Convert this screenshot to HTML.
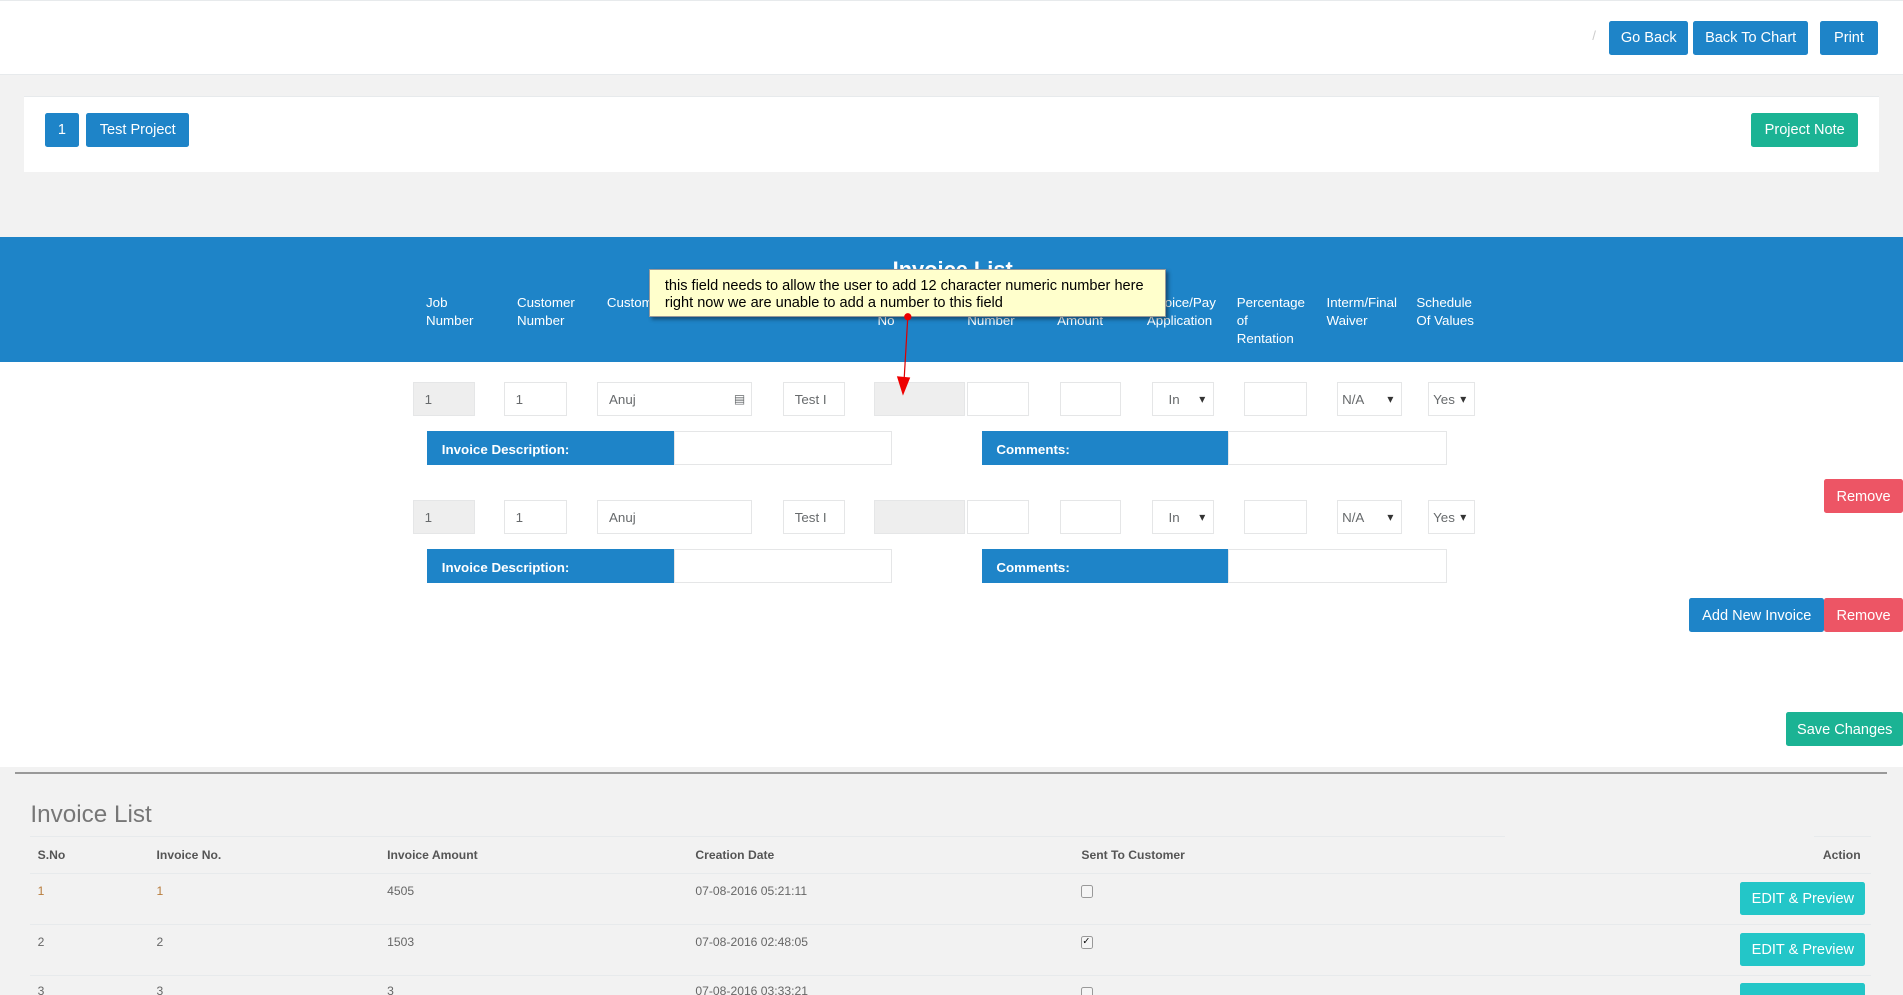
<!DOCTYPE html>
<html><head><meta charset="utf-8">
<style>
html,body{margin:0;padding:0;width:1903px;height:995px;overflow:hidden;background:#f2f2f2}
#w{zoom:1.21365;position:relative;width:1568px;height:820px;font-family:"Liberation Sans",sans-serif;font-size:12px;color:#555}
.a{position:absolute}
.btn{position:absolute;color:#fff;font-size:12px;display:flex;align-items:center;justify-content:center;border-radius:2px;padding-top:1px;box-sizing:border-box}
.bl{background:#1e84c8}
.gr{background:#1bb394}
.rd{background:#ed5565}
.tl{background:#23c6c8}
.in{position:absolute;background:#fff;border:1px solid #e5e6e7;box-sizing:border-box;height:28px;font-size:11px;color:#676a6c;padding-left:9px;line-height:28px}
.g{background:#eee}
.sel::after{content:"▾";position:absolute;right:6px;top:0;font-size:10px;color:#333}
.lbl{position:absolute;background:#1e84c8;color:#fff;font-weight:bold;font-size:11px;height:28px;line-height:32px;padding-left:12px;box-sizing:border-box}
.h{position:absolute;color:#fff;font-size:11px;line-height:15px;top:242px}
.th{position:absolute;top:699px;font-weight:bold;font-size:10px;color:#555}
.td{position:absolute;font-size:10px;color:#666}
.hl{position:absolute;left:25px;width:1517px;height:1px;background:#e7eaec}
.cb{position:absolute;width:8px;height:9px;border:1px solid #999;border-radius:2px;background:#f5f5f5;left:891px}
</style></head><body><div id="w">
<div class="a" style="left:0;top:0;width:1568px;height:62px;background:#fff;border-top:1px solid #e7eaec;border-bottom:1px solid #e7eaec;box-sizing:border-box"></div>
<div class="a" style="left:1312px;top:23px;color:#ccc;font-size:11px">/</div>
<div class="btn bl" style="left:1326px;top:17px;width:65px;height:28px">Go Back</div>
<div class="btn bl" style="left:1395px;top:17px;width:95px;height:28px">Back To Chart</div>
<div class="btn bl" style="left:1500px;top:17px;width:47px;height:28px">Print</div>

<div class="a" style="left:20px;top:79px;width:1528px;height:62px;background:#fff;border-top:1px solid #e7eaec"></div>
<div class="btn bl" style="left:37px;top:93px;width:28px;height:28px">1</div>
<div class="btn bl" style="left:71px;top:93px;width:85px;height:28px">Test Project</div>
<div class="btn gr" style="left:1443px;top:93px;width:88px;height:28px">Project Note</div>

<div class="a" style="left:0;top:195px;width:1568px;height:103px;background:#1e84c8"></div>
<div class="a" style="left:0;top:298px;width:1568px;height:334px;background:#fff"></div>
<div class="a" style="left:700px;top:212px;width:170px;text-align:center;color:#fff;font-weight:bold;font-size:18px">Invoice List</div>
<div class="h" style="left:351px">Job<br>Number</div>
<div class="h" style="left:426px">Customer<br>Number</div>
<div class="h" style="left:500px">Customer</div>
<div class="h" style="left:723px">Invoice<br>No</div>
<div class="h" style="left:797px">Invoice<br>Number</div>
<div class="h" style="left:871px">Invoice<br>Amount</div>
<div class="h" style="left:945px">Invoice/Pay<br>Application</div>
<div class="h" style="left:1019px">Percentage<br>of<br>Rentation</div>
<div class="h" style="left:1093px">Interm/Final<br>Waiver</div>
<div class="h" style="left:1167px">Schedule<br>Of Values</div>

<!-- row 1 -->
<div class="in g" style="left:340px;top:315px;width:51px">1</div>
<div class="in" style="left:415px;top:315px;width:52px">1</div>
<div class="in" style="left:492px;top:315px;width:128px">Anuj<span style="position:absolute;right:5px;top:0;font-size:10px">▤</span></div>
<div class="in" style="left:645px;top:315px;width:51px">Test I</div>
<div class="in g" style="left:720px;top:315px;width:75px"></div>
<div class="in" style="left:797px;top:315px;width:51px"></div>
<div class="in" style="left:873px;top:315px;width:51px"></div>
<div class="in sel" style="left:949px;top:315px;width:51px;padding-left:13px">In</div>
<div class="in" style="left:1025px;top:315px;width:52px"></div>
<div class="in sel" style="left:1102px;top:315px;width:53px;padding-left:3px">N/A</div>
<div class="in sel" style="left:1177px;top:315px;width:38px;padding-left:3px">Yes</div>
<div class="lbl" style="left:352px;top:355px;width:203px">Invoice Description:</div>
<div class="in" style="left:555px;top:355px;width:180px"></div>
<div class="lbl" style="left:809px;top:355px;width:203px">Comments:</div>
<div class="in" style="left:1012px;top:355px;width:180px"></div>
<div class="btn rd" style="left:1503px;top:395px;width:65px;height:28px">Remove</div>

<!-- row 2 -->
<div class="in g" style="left:340px;top:412px;width:51px">1</div>
<div class="in" style="left:415px;top:412px;width:52px">1</div>
<div class="in" style="left:492px;top:412px;width:128px">Anuj</div>
<div class="in" style="left:645px;top:412px;width:51px">Test I</div>
<div class="in g" style="left:720px;top:412px;width:75px"></div>
<div class="in" style="left:797px;top:412px;width:51px"></div>
<div class="in" style="left:873px;top:412px;width:51px"></div>
<div class="in sel" style="left:949px;top:412px;width:51px;padding-left:13px">In</div>
<div class="in" style="left:1025px;top:412px;width:52px"></div>
<div class="in sel" style="left:1102px;top:412px;width:53px;padding-left:3px">N/A</div>
<div class="in sel" style="left:1177px;top:412px;width:38px;padding-left:3px">Yes</div>
<div class="lbl" style="left:352px;top:452px;width:203px">Invoice Description:</div>
<div class="in" style="left:555px;top:452px;width:180px"></div>
<div class="lbl" style="left:809px;top:452px;width:203px">Comments:</div>
<div class="in" style="left:1012px;top:452px;width:180px"></div>
<div class="btn bl" style="left:1392px;top:493px;width:111px;height:28px">Add New Invoice</div>
<div class="btn rd" style="left:1503px;top:493px;width:65px;height:28px">Remove</div>
<div class="btn gr" style="left:1472px;top:587px;width:96px;height:28px">Save Changes</div>

<!-- tooltip -->
<div class="a" style="left:535px;top:222px;width:426px;height:39px;background:#ffffcc;border:1px solid #999;box-shadow:2px 2px 3px rgba(0,0,0,.4);box-sizing:border-box;padding:6px 12px;color:#000;font-size:12px;line-height:14px">this field needs to allow the user to add 12 character numeric number here<br>right now we are unable to add a number to this field</div>
<svg class="a" style="left:0;top:0" width="1568" height="820"><line x1="748" y1="261" x2="745" y2="312" stroke="#d00" stroke-width="1"/><polygon points="739,310 750,311 744,326" fill="#e00"/><circle cx="748" cy="261" r="3" fill="#e00"/></svg>

<!-- bottom -->
<div class="a" style="left:12px;top:636px;width:1543px;height:2px;background:#999"></div>
<div class="a" style="left:25px;top:660px;font-size:20px;color:#777">Invoice List</div>
<div class="a" style="left:25px;top:689px;width:1215px;height:1px;background:#e7eaec"></div>
<div class="a" style="left:1495px;top:689px;width:47px;height:1px;background:#e7eaec"></div>
<div class="th" style="left:31px">S.No</div>
<div class="th" style="left:129px">Invoice No.</div>
<div class="th" style="left:319px">Invoice Amount</div>
<div class="th" style="left:573px">Creation Date</div>
<div class="th" style="left:891px">Sent To Customer</div>
<div class="th" style="left:1502px">Action</div>
<div class="hl" style="top:719px"></div>
<div class="td" style="left:31px;top:728px;color:#b87c3c">1</div><div class="td" style="left:129px;top:728px;color:#b87c3c">1</div><div class="td" style="left:319px;top:728px">4505</div><div class="td" style="left:573px;top:728px">07-08-2016 05:21:11</div><div class="cb" style="top:729px"></div>
<div class="btn tl" style="left:1434px;top:727px;width:103px;height:27px">EDIT &amp; Preview</div>
<div class="hl" style="top:761px"></div>
<div class="td" style="left:31px;top:770px">2</div><div class="td" style="left:129px;top:770px">2</div><div class="td" style="left:319px;top:770px">1503</div><div class="td" style="left:573px;top:770px">07-08-2016 02:48:05</div><div class="cb" style="top:771px;font-size:8px;line-height:9px;color:#000">✓</div>
<div class="btn tl" style="left:1434px;top:769px;width:103px;height:27px">EDIT &amp; Preview</div>
<div class="hl" style="top:803px"></div>
<div class="td" style="left:31px;top:811px">3</div><div class="td" style="left:129px;top:811px">3</div><div class="td" style="left:319px;top:811px">3</div><div class="td" style="left:573px;top:811px">07-08-2016 03:33:21</div><div class="cb" style="top:813px"></div>
<div class="btn tl" style="left:1434px;top:810px;width:103px;height:27px"></div>
</div></body></html>
